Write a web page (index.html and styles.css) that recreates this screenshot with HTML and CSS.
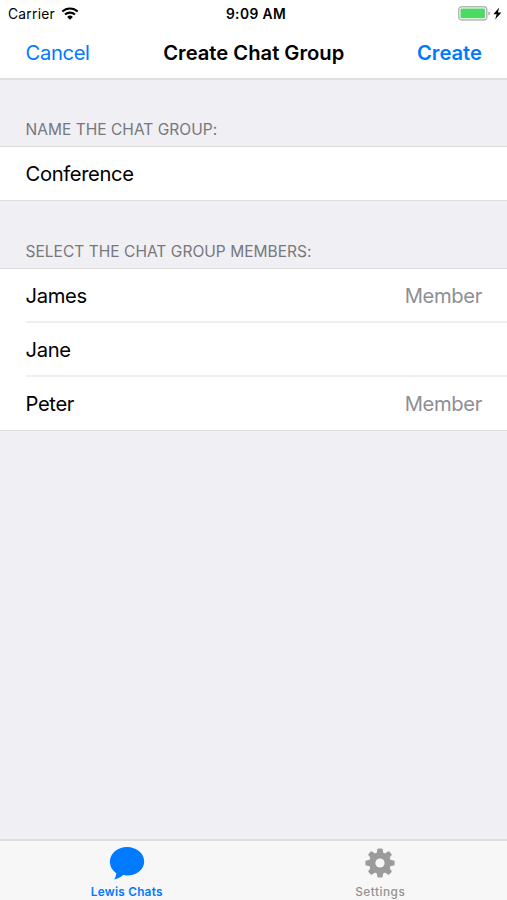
FILE: index.html
```html
<!DOCTYPE html>
<html lang="en">
<head>
    <meta charset="UTF-8">
    <meta name="viewport" content="width=device-width, initial-scale=1.0">
    <title>Create Chat Group</title>
    <link rel="stylesheet" href="styles.css">
</head>
<body>
    <div class="screen">
        <header class="top">
            <div class="status">
                <div class="carrier">
                    <span class="carrier-name">Carrier</span>
                    <svg class="wifi" width="18" height="14" viewBox="0 0 18 14">
                        <path d="M1.3 4.6a11 11 0 0 1 15.4 0M4 7.6a7.2 7.2 0 0 1 10 0" fill="none" stroke="#000" stroke-width="2.1"/>
                        <path d="M9 12.8L6.1 9.9a4.1 4.1 0 0 1 5.8 0z"/>
                    </svg>
                </div>
                <span class="time">9:09 AM</span>
                <div class="power">
                    <svg width="44" height="16" viewBox="0 0 44 16">
                        <rect x="0.8" y="0.8" width="28" height="13.2" rx="3" fill="#fff" stroke="#b4b4b4" stroke-width="1.4"/>
                        <rect x="2.5" y="2.6" width="24.4" height="9.6" rx="1" fill="#4cd964"/>
                        <path d="M30.3 5.3q1.7.6 1.7 2.1t-1.7 2.1z" fill="#aaa"/>
                        <path d="M41.2 1.4L35.4 8.3h3.3l-1.6 5.3 6.3-7.2h-3.5z"/>
                    </svg>
                </div>
            </div>
            <nav class="navbar">
                <a class="cancel">Cancel</a>
                <h1 class="title">Create Chat Group</h1>
                <a class="create">Create</a>
            </nav>
        </header>

        <main class="content">
            <h2 class="label label-name">NAME THE CHAT GROUP:</h2>
            <div class="group">
                <div class="row"><span>Conference</span></div>
            </div>
            <h2 class="label label-members">SELECT THE CHAT GROUP MEMBERS:</h2>
            <div class="group">
                <div class="row"><span>James</span><span class="member">Member</span></div>
                <div class="row"><span>Jane</span></div>
                <div class="row"><span>Peter</span><span class="member">Member</span></div>
            </div>
        </main>

        <footer class="tabbar">
            <div class="tab active">
                <svg width="36" height="34" viewBox="0 0 36 34" fill="currentColor">
                    <path d="M18 .9C8.4.9.9 7.4.9 15.5c0 4.9 2.5 9 6.4 11.7-.1 2.3-.9 4.4-2.2 6.2 3.7-.4 6.7-2 8.9-4.3 1.3.3 2.6.4 4 .4 9.6 0 17.2-6 17.2-14.1S27.6.9 18 .9z"/>
                </svg>
                <span class="chats">Lewis Chats</span>
            </div>
            <div class="tab">
                <svg class="gear" width="36" height="34" viewBox="-18 -17 36 34" fill="currentColor">
                    <defs>
                        <path id="teeth" d="M-3.5-9L-2.6-13.7q.2-.9 1.1-.9h3q.9 0 1.1.9L3.5-9V9L2.6 13.7q-.2.9-1.1.9h-3q-.9 0-1.1-.9L-3.5 9z"/>
                    </defs>
                    <circle r="10.8"/>
                    <use href="#teeth"/>
                    <use href="#teeth" transform="rotate(45)"/>
                    <use href="#teeth" transform="rotate(90)"/>
                    <use href="#teeth" transform="rotate(135)"/>
                    <circle r="4.6" fill="#f7f7f7"/>
                </svg>
                <span class="settings">Settings</span>
            </div>
        </footer>
    </div>
</body>
</html>
```
FILE: styles.css
```css
* {
    box-sizing: border-box;
}
body {
    margin: 0;
    font-family: Inter, "Liberation Sans", sans-serif;
    font-size: 20.2px;
    letter-spacing: -0.35px;
    color: #000;
}
.screen {
    display: flex;
    flex-direction: column;
    height: 900px;
    background: #efeff4;
}
.top {
    height: 80px;
    background: #fff;
    border-bottom: 2px solid #e0e0e3;
}
.status,
.navbar {
    display: grid;
    grid-template-columns: 1fr auto 1fr;
    align-items: center;
}
.status {
    height: 27px;
    padding: 0 5px 0 8px;
    font-size: 13.8px;
}
.carrier {
    display: flex;
    align-items: center;
    gap: 6px;
}
.carrier-name {
    letter-spacing: 0.25px;
}
.wifi {
    display: block;
}
.time {
    padding-left: 2px;
    font-weight: 600;
    letter-spacing: 0.4px;
}
.power {
    display: flex;
    justify-content: flex-end;
}
.navbar {
    height: 51px;
    padding: 0 25px 0 25.5px;
}
.cancel,
.create {
    color: #007aff;
}
.create {
    font-weight: 600;
    letter-spacing: 0;
    text-align: right;
}
.title {
    margin: 0;
    font-size: 20.2px;
    font-weight: 600;
    letter-spacing: 0;
}
.content {
    flex: 1;
}
.label {
    display: flex;
    align-items: flex-start;
    margin: 0;
    padding-left: 25.5px;
    font-size: 15.5px;
    font-weight: 400;
    line-height: 20px;
    letter-spacing: 0.03px;
    color: #77777c;
}
.label-name {
    padding-top: 40px;
    height: 66px;
}
.label-members {
    padding-top: 41px;
    height: 67px;
}
.group {
    background: #fff;
    border-top: 1px solid #dddde0;
    border-bottom: 1px solid #dddde0;
}
.row {
    display: flex;
    align-items: center;
    justify-content: space-between;
    height: 54px;
    margin-left: 25.5px;
    padding-right: 25px;
    padding-top: 1px;
    border-bottom: 2px solid #efeff1;
}
.row:last-child {
    height: 53px;
    padding-top: 0;
    border-bottom: 0;
}
.member {
    color: #8e8e93;
}
.tabbar {
    display: grid;
    grid-template-columns: 1fr 1fr;
    height: 61px;
    background: #f7f7f7;
    border-top: 2px solid #dedee0;
}
.tab {
    display: flex;
    flex-direction: column;
    align-items: center;
    gap: 5px;
    padding-top: 5px;
    font-size: 11.8px;
    font-weight: 500;
    line-height: 14px;
    color: #929292;
}
.active {
    color: #007aff;
    font-weight: 600;
}
.gear {
    color: #9b9b9b;
}
.chats {
    letter-spacing: 0.25px;
}
.settings {
    letter-spacing: 0.5px;
}
```
